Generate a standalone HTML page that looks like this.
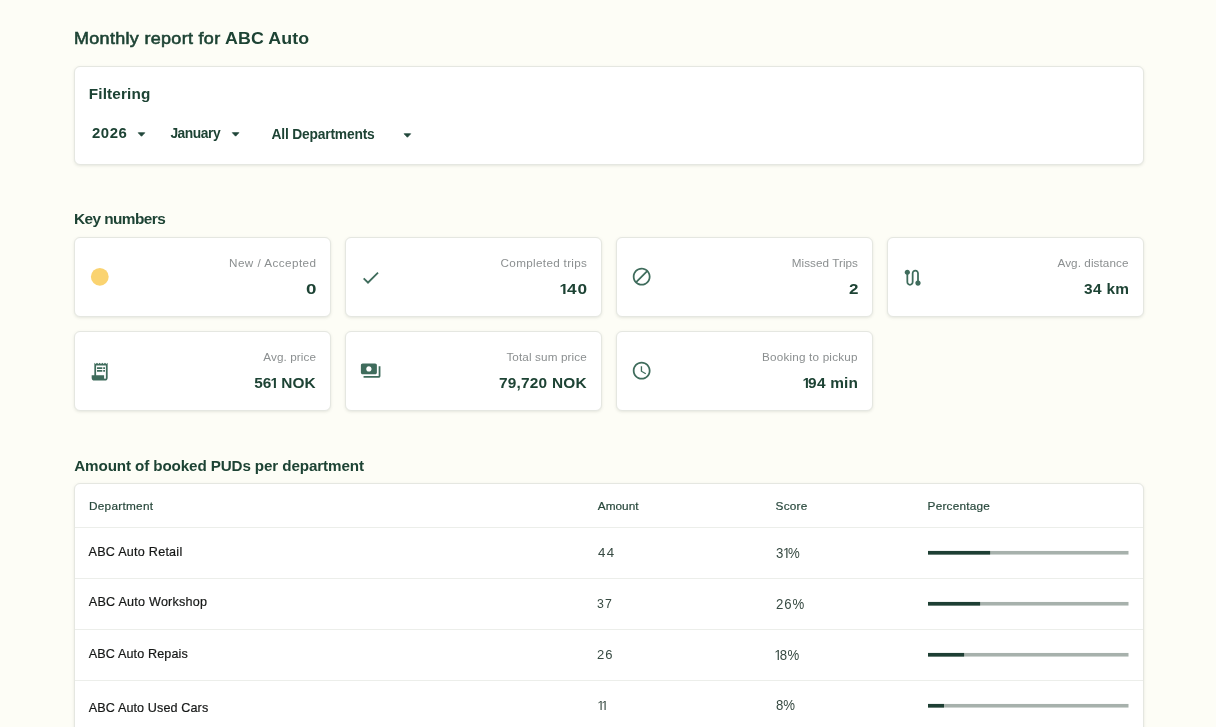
<!DOCTYPE html>
<html><head><meta charset="utf-8"><title>Monthly report</title>
<style>
*{box-sizing:border-box;margin:0;padding:0}
html,body{width:1216px;height:727px;overflow:hidden;background:#fdfdf6;font-family:"Liberation Sans",sans-serif}
.t{position:absolute;white-space:nowrap;line-height:1}
#txt{position:absolute;left:0;top:0;width:1216px;height:727px;will-change:transform}
.card{position:absolute;background:#fff;border:1px solid #e5e7e1;border-radius:6px;box-shadow:0 1px 3px rgba(70,80,60,.13)}
.hr{position:absolute;left:75px;width:1068px;height:1px;background:#eceeea}
svg{position:absolute;overflow:visible}
</style></head><body>
<div class="card" style="left:74px;top:66px;width:1070px;height:99px"></div>
<div class="card" style="left:74px;top:237px;width:257px;height:80px"></div>
<div class="card" style="left:345px;top:237px;width:257px;height:80px"></div>
<div class="card" style="left:616px;top:237px;width:257px;height:80px"></div>
<div class="card" style="left:887px;top:237px;width:257px;height:80px"></div>
<div class="card" style="left:74px;top:331px;width:257px;height:80px"></div>
<div class="card" style="left:345px;top:331px;width:257px;height:80px"></div>
<div class="card" style="left:616px;top:331px;width:257px;height:80px"></div>
<div class="card" style="left:74px;top:483px;width:1070px;height:270px"></div>
<div class="hr" style="top:527px"></div>
<div class="hr" style="top:578px"></div>
<div class="hr" style="top:629px"></div>
<div class="hr" style="top:680px"></div>
<svg style="left:0;top:0" width="1216" height="727"><rect x="928" y="550.95" width="200.5" height="3.6" fill="#a7b1ac"/><rect x="928" y="550.95" width="62.1" height="3.6" fill="#1e3f34"/><rect x="928" y="601.95" width="200.5" height="3.6" fill="#a7b1ac"/><rect x="928" y="601.95" width="52.1" height="3.6" fill="#1e3f34"/><rect x="928" y="652.95" width="200.5" height="3.6" fill="#a7b1ac"/><rect x="928" y="652.95" width="36.1" height="3.6" fill="#1e3f34"/><rect x="928" y="703.95" width="200.5" height="3.6" fill="#a7b1ac"/><rect x="928" y="703.95" width="16.0" height="3.6" fill="#1e3f34"/></svg>
<svg style="left:0;top:0" width="1216" height="727"><circle cx="99.8" cy="276.8" r="8.9" fill="#fad370"/></svg>
<svg style="left:360.33px;top:266.63px" width="21.33" height="21.33" viewBox="0 0 24 24" fill="#3f6c5c"><path d="M9 16.17L4.83 12l-1.42 1.41L9 19 21 7l-1.41-1.41z"/></svg>
<svg style="left:631.13px;top:266.44px" width="21.33" height="21.33" viewBox="0 0 24 24" fill="#3f6c5c"><path d="M12 2C6.48 2 2 6.48 2 12s4.48 10 10 10 10-4.48 10-10S17.52 2 12 2zM4 12c0-4.42 3.58-8 8-8 1.85 0 3.55.63 4.9 1.69L5.69 16.9C4.63 15.55 4 13.85 4 12zm8 8c-1.85 0-3.55-.63-4.9-1.69L18.31 7.1C19.37 8.45 20 10.15 20 12c0 4.42-3.58 8-8 8z"/></svg>
<svg style="left:902.34px;top:266.63px" width="21.33" height="21.33" viewBox="0 0 24 24" fill="#3f6c5c"><path d="M19 15.18V7c0-2.21-1.79-4-4-4s-4 1.79-4 4v10c0 1.1-.9 2-2 2s-2-.9-2-2V8.82C8.16 8.4 9 7.3 9 6c0-1.66-1.34-3-3-3S3 4.34 3 6c0 1.3.84 2.4 2 2.82V17c0 2.21 1.79 4 4 4s4-1.79 4-4V7c0-1.1.9-2 2-2s2 .9 2 2v8.18c-1.16.41-2 1.51-2 2.82 0 1.66 1.34 3 3 3s3-1.34 3-3c0-1.3-.84-2.4-2-2.82z"/></svg>
<svg style="left:89.13px;top:360.73px" width="21.33" height="21.33" viewBox="0 0 24 24" fill="#3f6c5c"><path d="M19.5 3.5L18 2l-1.5 1.5L15 2l-1.5 1.5L12 2l-1.5 1.5L9 2 7.5 3.5 6 2v14H3v3c0 1.66 1.34 3 3 3h12c1.66 0 3-1.34 3-3V2l-1.5 1.5zM19 19c0 .55-.45 1-1 1s-1-.45-1-1v-3H8V5h11v14z"/><path d="M9 7h6v2H9zm7 0h2v2h-2zm-7 3h6v2H9zm7 0h2v2h-2z"/></svg>
<svg style="left:360.23px;top:360.44px" width="21.33" height="21.33" viewBox="0 0 24 24" fill="#3f6c5c"><path d="M19 14V6c0-1.1-.9-2-2-2H3c-1.1 0-2 .9-2 2v8c0 1.1.9 2 2 2h14c1.1 0 2-.9 2-2zm-9-1c-1.66 0-3-1.34-3-3s1.34-3 3-3 3 1.34 3 3-1.34 3-3 3zm13-6v11c0 1.1-.9 2-2 2H4v-2h17V7h2z"/></svg>
<svg style="left:631.13px;top:360.44px" width="21.33" height="21.33" viewBox="0 0 24 24" fill="#3f6c5c"><path d="M11.99 2C6.47 2 2 6.48 2 12s4.47 10 9.99 10C17.52 22 22 17.52 22 12S17.52 2 11.99 2zM12 20c-4.42 0-8-3.58-8-8s3.58-8 8-8 8 3.58 8 8-3.58 8-8 8zm.5-13H11v6l5.25 3.15.75-1.23-4.5-2.67z"/></svg>
<svg style="left:0;top:0" width="1216" height="727"><path d="M138.25 132.75h6.5l-3.25 3.5z" fill="#21463a" stroke="#21463a" stroke-width="0.8" stroke-linejoin="round"/></svg>
<svg style="left:0;top:0" width="1216" height="727"><path d="M232.35 132.65h6.5l-3.25 3.5z" fill="#21463a" stroke="#21463a" stroke-width="0.8" stroke-linejoin="round"/></svg>
<svg style="left:0;top:0" width="1216" height="727"><path d="M404.15 133.75h6.5l-3.25 3.5z" fill="#21463a" stroke="#21463a" stroke-width="0.8" stroke-linejoin="round"/></svg>
<div id="txt">
<div class="t" id="t1" style="left:73.87px;top:30.35px;font-size:17.3px;font-weight:400;color:#1d4334;letter-spacing:0.301px;transform:scaleX(1.0400);transform-origin:0 0;-webkit-text-stroke:0.6px #1d4334">Monthly report for</div>
<div class="t" id="t2" style="left:224.75px;top:30.35px;font-size:17.3px;font-weight:700;color:#1d4334;letter-spacing:0.097px;transform:scaleX(1.0300);transform-origin:0 0">ABC Auto</div>
<div class="t" id="f0" style="left:88.75px;top:85.85px;font-size:15.3px;font-weight:700;color:#1d4334;letter-spacing:0.150px">Filtering</div>
<div class="t" id="f1" style="left:92.38px;top:126.60px;font-size:13.8px;font-weight:700;color:#1d4334;letter-spacing:0.517px;transform:scaleX(1.0800);transform-origin:0 0">2026</div>
<div class="t" id="f2" style="left:170.38px;top:126.60px;font-size:13.8px;font-weight:700;color:#1d4334;letter-spacing:-0.446px">January</div>
<div class="t" id="f3" style="left:271.50px;top:127.60px;font-size:13.8px;font-weight:700;color:#1d4334;letter-spacing:-0.179px">All Departments</div>
<div class="t" id="k0" style="left:74.00px;top:210.80px;font-size:15.4px;font-weight:700;color:#1d4334;letter-spacing:-0.575px">Key numbers</div>
<div class="t" id="l1" style="left:229.00px;top:256.65px;font-size:11.7px;font-weight:400;color:#8b8f90;letter-spacing:0.450px">New / Accepted</div>
<div class="t" id="l2" style="left:500.62px;top:256.65px;font-size:11.7px;font-weight:400;color:#8b8f90;letter-spacing:0.321px">Completed trips</div>
<div class="t" id="l3" style="left:791.75px;top:256.65px;font-size:11.7px;font-weight:400;color:#8b8f90;letter-spacing:0.055px">Missed Trips</div>
<div class="t" id="l4" style="left:1057.50px;top:256.65px;font-size:11.7px;font-weight:400;color:#8b8f90;letter-spacing:0.083px">Avg. distance</div>
<div class="t" id="l5" style="left:263.37px;top:350.65px;font-size:11.7px;font-weight:400;color:#8b8f90;letter-spacing:0.094px">Avg. price</div>
<div class="t" id="l6" style="left:506.38px;top:350.65px;font-size:11.7px;font-weight:400;color:#8b8f90;letter-spacing:0.129px">Total sum price</div>
<div class="t" id="l7" style="left:762.00px;top:350.65px;font-size:11.7px;font-weight:400;color:#8b8f90;letter-spacing:0.197px">Booking to pickup</div>
<div class="t" id="v1" style="left:305.75px;top:280.80px;font-size:15.4px;font-weight:700;color:#1d4334;letter-spacing:0.000px;transform:scaleX(1.2212);transform-origin:0 0">0</div>
<div class="t" id="v2" style="left:559.87px;top:280.80px;font-size:15.4px;font-weight:700;color:#1d4334;letter-spacing:0.837px;transform:scaleX(1.1200);transform-origin:0 0"><svg viewBox="70 -1409 760 1409" preserveAspectRatio="none" style="position:static;display:inline-block;width:5.394px;height:10px;vertical-align:baseline;margin-right:0.837px"><path d="M140 -959V-1180L493 -1409H759V0H478V-1170Z" fill="currentColor"/></svg>40</div>
<div class="t" id="v3" style="left:848.62px;top:280.80px;font-size:15.4px;font-weight:700;color:#1d4334;letter-spacing:0.000px;transform:scaleX(1.1034);transform-origin:0 0">2</div>
<div class="t" id="v4" style="left:1084.12px;top:280.80px;font-size:15.4px;font-weight:700;color:#1d4334;letter-spacing:0.325px">34 km</div>
<div class="t" id="v5" style="left:254.25px;top:374.80px;font-size:15.4px;font-weight:700;color:#1d4334;letter-spacing:0.054px">56<svg viewBox="70 -1409 760 1409" preserveAspectRatio="none" style="position:static;display:inline-block;width:5.394px;height:10px;vertical-align:baseline;margin-right:0.054px"><path d="M140 -959V-1180L493 -1409H759V0H478V-1170Z" fill="currentColor"/></svg> NOK</div>
<div class="t" id="v6" style="left:498.88px;top:374.80px;font-size:15.4px;font-weight:700;color:#1d4334;letter-spacing:0.239px">79,720 NOK</div>
<div class="t" id="v7" style="left:802.50px;top:374.80px;font-size:15.4px;font-weight:700;color:#1d4334;letter-spacing:0.225px"><svg viewBox="70 -1409 760 1409" preserveAspectRatio="none" style="position:static;display:inline-block;width:5.394px;height:10px;vertical-align:baseline;margin-right:0.225px"><path d="M140 -959V-1180L493 -1409H759V0H478V-1170Z" fill="currentColor"/></svg>94 min</div>
<div class="t" id="h2" style="left:74.25px;top:457.90px;font-size:15.2px;font-weight:700;color:#1d4334;letter-spacing:-0.113px">Amount of booked PUDs per department</div>
<div class="t" id="th1" style="left:89.00px;top:501.10px;font-size:11.8px;font-weight:400;color:#27473b;letter-spacing:0.267px;-webkit-text-stroke:0.2px #27473b">Department</div>
<div class="t" id="th2" style="left:597.75px;top:501.10px;font-size:11.8px;font-weight:400;color:#27473b;letter-spacing:0.025px;-webkit-text-stroke:0.2px #27473b">Amount</div>
<div class="t" id="th3" style="left:775.62px;top:501.10px;font-size:11.8px;font-weight:400;color:#27473b;letter-spacing:0.200px;-webkit-text-stroke:0.2px #27473b">Score</div>
<div class="t" id="th4" style="left:927.62px;top:501.10px;font-size:11.8px;font-weight:400;color:#27473b;letter-spacing:0.208px;-webkit-text-stroke:0.2px #27473b">Percentage</div>
<div class="t" id="d1" style="left:88.50px;top:545.70px;font-size:12.6px;font-weight:400;color:#151716;letter-spacing:0.243px;-webkit-text-stroke:0.2px #151716">ABC Auto Retail</div>
<div class="t" id="d2" style="left:88.75px;top:595.70px;font-size:12.6px;font-weight:400;color:#151716;letter-spacing:0.237px;-webkit-text-stroke:0.2px #151716">ABC Auto Workshop</div>
<div class="t" id="d3" style="left:88.75px;top:647.70px;font-size:12.6px;font-weight:400;color:#151716;letter-spacing:0.120px;-webkit-text-stroke:0.2px #151716">ABC Auto Repais</div>
<div class="t" id="d4" style="left:88.75px;top:701.70px;font-size:12.6px;font-weight:400;color:#151716;letter-spacing:0.109px;-webkit-text-stroke:0.2px #151716">ABC Auto Used Cars</div>
<div class="t" id="a1" style="left:597.75px;top:546.85px;font-size:12.3px;font-weight:400;color:#384b43;letter-spacing:1.296px;transform:scaleX(1.0800);transform-origin:0 0">44</div>
<div class="t" id="a2" style="left:596.88px;top:597.85px;font-size:12.3px;font-weight:400;color:#384b43;letter-spacing:1.250px">37</div>
<div class="t" id="a3" style="left:596.50px;top:648.85px;font-size:12.3px;font-weight:400;color:#384b43;letter-spacing:0.967px;transform:scaleX(1.0600);transform-origin:0 0">26</div>
<div class="t" id="a4" style="left:597.50px;top:699.85px;font-size:12.3px;font-weight:400;color:#384b43;letter-spacing:0.500px"><svg viewBox="120 -1409 660 1409" preserveAspectRatio="none" style="position:static;display:inline-block;width:4.216px;height:9px;vertical-align:baseline;margin-right:0.500px"><path d="M197 -1010V-1180L530 -1409H696V0H515V-1237Z" fill="currentColor"/></svg><svg viewBox="120 -1409 660 1409" preserveAspectRatio="none" style="position:static;display:inline-block;width:4.216px;height:9px;vertical-align:baseline;margin-right:0.500px"><path d="M197 -1010V-1180L530 -1409H696V0H515V-1237Z" fill="currentColor"/></svg></div>
<div class="t" id="s1" style="left:775.75px;top:547.05px;font-size:13.9px;font-weight:400;color:#384b43;letter-spacing:0.079px;transform:scaleX(0.9500);transform-origin:0 0">3<svg viewBox="120 -1409 660 1409" preserveAspectRatio="none" style="position:static;display:inline-block;width:4.684px;height:10px;vertical-align:baseline;margin-right:0.079px"><path d="M197 -1010V-1180L530 -1409H696V0H515V-1237Z" fill="currentColor"/></svg>%</div>
<div class="t" id="s2" style="left:775.62px;top:598.05px;font-size:13.9px;font-weight:400;color:#384b43;letter-spacing:0.921px;transform:scaleX(0.9500);transform-origin:0 0">26%</div>
<div class="t" id="s3" style="left:775.12px;top:649.05px;font-size:13.9px;font-weight:400;color:#384b43;letter-spacing:0.382px;transform:scaleX(0.9500);transform-origin:0 0"><svg viewBox="120 -1409 660 1409" preserveAspectRatio="none" style="position:static;display:inline-block;width:4.684px;height:10px;vertical-align:baseline;margin-right:0.382px"><path d="M197 -1010V-1180L530 -1409H696V0H515V-1237Z" fill="currentColor"/></svg>8%</div>
<div class="t" id="s4" style="left:775.75px;top:699.05px;font-size:13.9px;font-weight:400;color:#384b43;letter-spacing:-0.158px;transform:scaleX(0.9500);transform-origin:0 0">8%</div>
</div>
</body></html>
